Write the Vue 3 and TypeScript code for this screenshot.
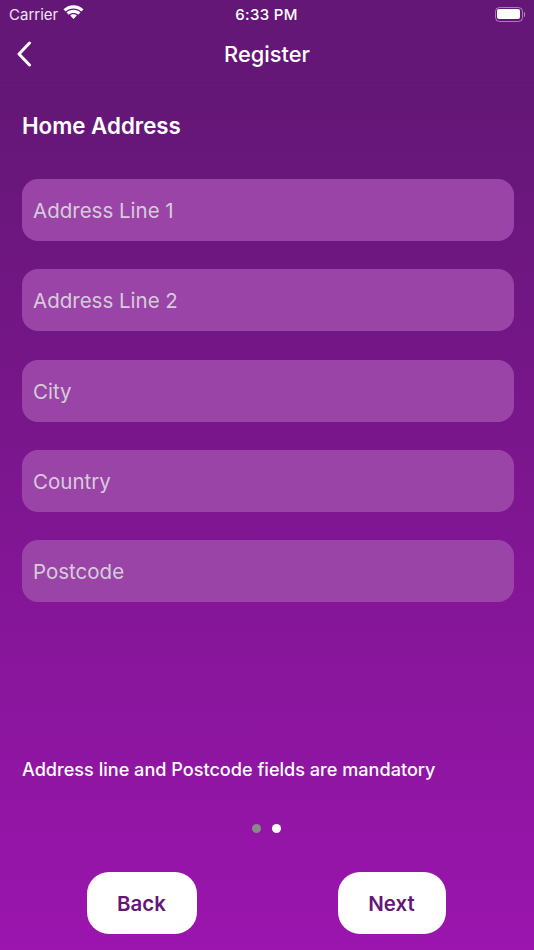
<script setup lang="ts">
const fields: string[] = ['Address Line 1', 'Address Line 2', 'City', 'Country', 'Postcode']
</script>

<template>
  <div class="screen">
    <div class="status">
      <div class="status-left">
        <span class="carrier">Carrier</span>
        <svg class="wifi" width="21" height="16" viewBox="0 0 20 15">
          <path d="M10 3.200c2.900 0 5.500 1.100 7.500 2.950l2.100-2.150C17.100 1.500 13.700 0 10 0S2.900 1.500.4 4l2.100 2.150C4.500 4.300 7.100 3.200 10 3.200z" fill="#fff"/>
          <path d="M10 7.400c1.750 0 3.300.650 4.500 1.750l2.150-2.200C14.900 5.300 12.550 4.350 10 4.350S5.100 5.300 3.350 6.950L5.500 9.150C6.700 8.050 8.250 7.400 10 7.400z" fill="#fff"/>
          <path d="M10 8.600c-1.200 0-2.300.450-3.150 1.200L10 13.100l3.150-3.300C12.300 9.050 11.200 8.600 10 8.600z" fill="#fff"/>
        </svg>
      </div>
      <span class="time">6:33 PM</span>
      <div class="battery">
        <div class="battery-body"><div class="battery-fill"></div></div>
        <div class="battery-cap"></div>
      </div>
    </div>

    <div class="nav">
      <svg class="chevron" width="16" height="26" viewBox="0 0 16 26">
        <path d="M13.500 2 L3 13 L13.500 24" fill="none" stroke="#fff" stroke-width="3" stroke-linecap="round" stroke-linejoin="round"/>
      </svg>
      <span class="nav-title">Register</span>
    </div>

    <div class="content">
      <h1 class="heading">Home Address</h1>
      <div class="fields">
        <div v-for="f in fields" :key="f" class="field">{{ f }}</div>
      </div>
      <p class="note">Address line and Postcode fields are mandatory</p>
      <div class="dots">
        <span class="dot dim"></span>
        <span class="dot"></span>
      </div>
      <div class="actions">
        <button class="btn back">Back</button>
        <button class="btn next">Next</button>
      </div>
    </div>
  </div>
</template>

<style scoped>
.screen {
  width: 534px;
  height: 950px;
  overflow: hidden;
  display: flex;
  flex-direction: column;
  background: linear-gradient(180deg, #641776 0%, #641776 10%, #9b15ae 100%);
  font-family: Inter, "Liberation Sans", sans-serif;
  color: #fff;
}
.status {
  height: 28px;
  flex: none;
  display: grid;
  grid-template-columns: 1fr auto 1fr;
  align-items: center;
  padding: 0 9px 0 9px;
}
.status-left {
  display: flex;
  align-items: center;
  gap: 5px;
}
.carrier {
  font-size: 15px;
  color: #efe6f1;
}
.wifi {
  margin-top: -2px;
}
.time {
  font-size: 15px;
  font-weight: 500;
  letter-spacing: 0.35px;
  margin-left: -1px;
}
.battery {
  justify-self: end;
  display: flex;
  align-items: center;
  gap: 1px;
}
.battery-body {
  width: 28px;
  height: 15px;
  box-sizing: border-box;
  border: 1.5px solid rgba(255, 255, 255, 0.45);
  border-radius: 4.5px;
  padding: 1.5px;
}
.battery-fill {
  width: 100%;
  height: 100%;
  background: #fff;
  border-radius: 2px;
}
.battery-cap {
  width: 1.5px;
  height: 5px;
  background: rgba(255, 255, 255, 0.5);
  border-radius: 0 1px 1px 0;
}
.nav {
  position: relative;
  height: 55px;
  flex: none;
  display: flex;
  align-items: center;
  justify-content: center;
  border-bottom: 1px solid #5e1670;
  box-sizing: border-box;
}
.chevron {
  position: absolute;
  left: 16px;
  top: 13px;
}
.nav-title {
  font-size: 21.800px;
  font-weight: 500;
  margin-top: -2px;
}
.content {
  flex: 1;
  display: flex;
  flex-direction: column;
  padding: 0 20px 16px 22px;
}
.heading {
  margin: 28px 0 0;
  height: 30px;
  line-height: 30px;
  font-size: 22.300px;
  font-weight: 600;
}
.fields {
  margin-top: 38px;
  display: flex;
  flex-direction: column;
  gap: 28.300px;
}
.field {
  height: 62px;
  line-height: 63.500px;
  padding-left: 11px;
  border-radius: 16px;
  background: #9a44a8;
  color: #d6ccd9;
  font-size: 20.500px;
}
.note {
  margin: 155px 0 0;
  font-size: 18.100px;
  font-weight: 500;
  line-height: 24px;
}
.dots {
  margin-top: 43px;
  display: flex;
  justify-content: center;
  gap: 11px;
  height: 8px;
  padding-right: 3px;
}
.dot {
  width: 9px;
  height: 9px;
  border-radius: 50%;
  background: #fff;
}
.dot.dim {
  background: #8a8a8a;
}
.actions {
  margin-top: 40px;
  display: flex;
  padding-left: 64.500px;
  gap: 141px;
}
.btn {
  height: 62px;
  border: none;
  border-radius: 22px;
  background: #fff;
  color: #641776;
  font-family: inherit;
  font-size: 20.500px;
  font-weight: 600;
  padding: 0;
}
.back {
  width: 110px;
}
.next {
  width: 108px;
}
</style>
